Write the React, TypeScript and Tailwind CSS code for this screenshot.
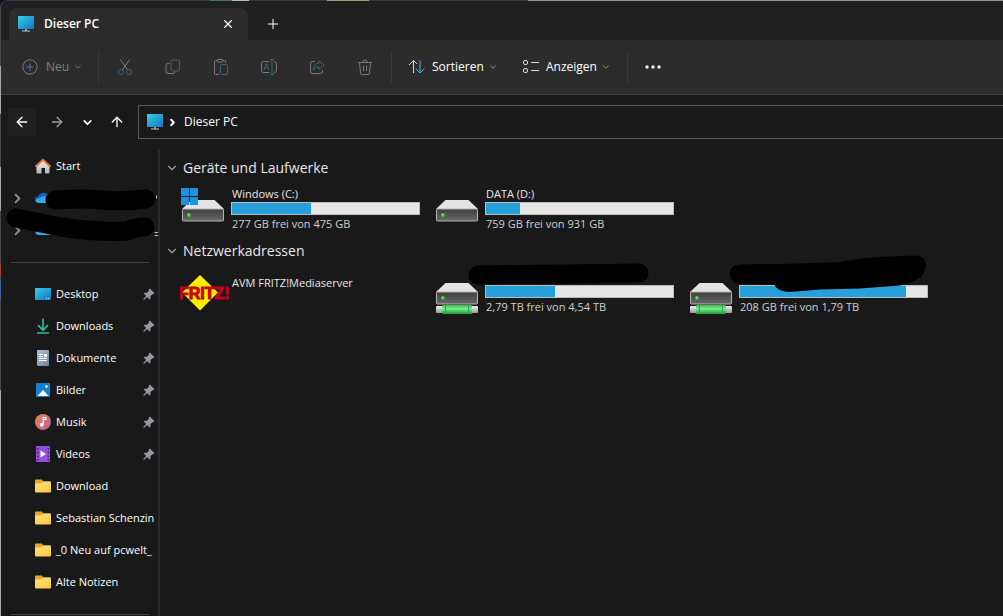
import type { ReactNode } from 'react';
import { ArrowLeft, ArrowRight, ArrowUp, ChevronDown, ChevronRight, Plus, X } from 'lucide-react';

function Monitor() {
  return (
    <svg width="16" height="16" viewBox="0 0 16 16" className="shrink-0">
      <defs>
        <linearGradient id="screen" x1="0" y1="0" x2="1" y2="1">
          <stop offset="0" stopColor="#35d0e8" />
          <stop offset="1" stopColor="#1273c4" />
        </linearGradient>
      </defs>
      <rect x="7" y="13" width="2" height="2" fill="#8b949c" />
      <rect x="4" y="14.5" width="8" height="1" fill="#c3c8cc" />
      <rect y="0" width="16" height="13" rx="0.8" fill="url(#screen)" />
    </svg>
  );
}

function Home() {
  return (
    <svg width="16" height="16" viewBox="0 0 16 16">
      <defs>
        <linearGradient id="wall" x1="0" y1="0" x2="0" y2="1">
          <stop offset="0" stopColor="#f4f4f4" />
          <stop offset="1" stopColor="#b4b4b4" />
        </linearGradient>
      </defs>
      <path d="M1.5 7.5 8 2l6.500 5.500V14.500a1 1 0 0 1-1 1H10V10H6.500v5.500h-4a1 1 0 0 1-1-1z" fill="url(#wall)" />
      <path d="M1 8.200 8 1.800l7 6.400" fill="none" stroke="#e8762c" strokeWidth="2" strokeLinecap="round" strokeLinejoin="round" />
    </svg>
  );
}

function Cloud() {
  return (
    <svg width="20" height="16" viewBox="0 0 20 16">
      <path d="M3.500 13C-1 12.500-1 7 3 6.500 5 2 11 1.500 13 5c5-.5 6 7 1 8z" fill="#0b68c8" />
      <path d="M3.500 13C1 12.500 0 10.500 1 9.500L9 6l9 5-3 2z" fill="#35a5ee" />
    </svg>
  );
}

function DesktopIcon() {
  return (
    <svg width="16" height="16" viewBox="0 0 16 16">
      <rect y="2" width="16" height="12" rx="0.8" fill="url(#screen)" />
      <path d="M11 12.500h1M13 12.500h1" stroke="#d5efff" />
    </svg>
  );
}

function DownloadsIcon() {
  return (
    <svg width="16" height="16" viewBox="0 0 16 16" fill="none" stroke="#2bb795" strokeWidth="1.700">
      <path d="M8 .5V12M3 7.200l5 5 5-5M2 15h12" />
    </svg>
  );
}

function DocumentIcon() {
  return (
    <svg width="16" height="16" viewBox="0 0 16 16">
      <defs>
        <linearGradient id="paper" x1="0" y1="0" x2="1" y2="1">
          <stop offset="0" stopColor="#b4c3d6" />
          <stop offset="1" stopColor="#6880a0" />
        </linearGradient>
      </defs>
      <rect x="2" width="12" height="16" rx="1" fill="url(#paper)" />
      <path d="M4 4.500h4M4 6.500h4M4 8.500h8M4 10.500h8" stroke="#fff" />
      <rect x="9" y="4" width="3" height="3" fill="#fff" />
    </svg>
  );
}

function PictureIcon() {
  return (
    <svg width="16" height="16" viewBox="0 0 16 16">
      <rect x="1" y="1" width="14" height="14" rx="1" fill="#1681d2" />
      <path d="m2.500 14 5.500-6 5.500 6z" fill="#fff" />
      <circle cx="11.500" cy="4.500" r="1.200" fill="#fff" />
    </svg>
  );
}

function MusicIcon() {
  return (
    <svg width="16" height="16" viewBox="0 0 16 16">
      <defs>
        <linearGradient id="disc" x1="0" y1="0" x2="1" y2="1">
          <stop offset="0" stopColor="#ee8350" />
          <stop offset="1" stopColor="#b4609d" />
        </linearGradient>
      </defs>
      <circle cx="8" cy="8" r="8" fill="url(#disc)" />
      <path d="M8.200 10.500V3.500h2.600v2H8.800" fill="none" stroke="#fff" strokeWidth="1.200" />
      <circle cx="6.800" cy="10.800" r="2" fill="#fff" />
    </svg>
  );
}

function VideoIcon() {
  return (
    <svg width="16" height="16" viewBox="0 0 16 16">
      <rect x="1" width="14" height="16" rx="1" fill="#9350dd" />
      <path d="M2.700 2v13M13.300 2v13" stroke="#4a2391" strokeWidth="1.500" strokeDasharray="1.700 2" />
      <path d="M5.500 4.500v7L11 8z" fill="#fff" />
    </svg>
  );
}

function FolderIcon() {
  return (
    <svg width="16" height="16" viewBox="0 0 16 16">
      <defs>
        <linearGradient id="folder" x1="0" y1="0" x2="1" y2="1">
          <stop offset="0" stopColor="#ffe28a" />
          <stop offset="1" stopColor="#fbc842" />
        </linearGradient>
      </defs>
      <path d="M0 2.500a1 1 0 0 1 1-1h5.500L8.500 3.500H15a1 1 0 0 1 1 1V8H0z" fill="#eaa81c" />
      <path d="M0 6.500a1 1 0 0 1 1-1h5.500L8.500 3.500H15a1 1 0 0 1 1 1v9a1 1 0 0 1-1 1H1a1 1 0 0 1-1-1z" fill="url(#folder)" />
    </svg>
  );
}

function Pin() {
  return (
    <svg width="12" height="12" viewBox="0 0 12 12" className="shrink-0">
      <path d="M6.800.5 11.500 5.200 10.500 6.200 9.600 6 7.500 8.100v2.400l-.9.900L4.200 9 .8 11.900l-.6-.6L3.200 8 .8 5.600l.9-.9H4.100L6.200 2.600 5.900 1.400z" fill="#959ba1" />
    </svg>
  );
}

function Drive({ windows, network }: { windows?: boolean; network?: boolean }) {
  return (
    <svg width="48" height="48" viewBox="0 0 48 48" className="mt-1 shrink-0">
      <defs>
        <linearGradient id="case" x1="0" y1="0" x2="0" y2="1">
          <stop offset="0" stopColor="#3d3d3d" />
          <stop offset="1" stopColor="#6a6a6a" />
        </linearGradient>
        <linearGradient id="cable" x1="0" y1="0" x2="0" y2="1">
          <stop offset="0" stopColor="#38b653" />
          <stop offset=".4" stopColor="#76f08d" />
          <stop offset="1" stopColor="#1f963a" />
        </linearGradient>
        <linearGradient id="plug" x1="0" y1="0" x2="0" y2="1">
          <stop offset="0" stopColor="#f0f0f0" />
          <stop offset="1" stopColor="#9a9a9a" />
        </linearGradient>
      </defs>
      <path d="M12.500 16h23L45 25H3z" fill="#e3e3e6" />
      <rect x="3.500" y="25" width="41" height="12" rx="1" fill="url(#case)" stroke="#b5b5b5" />
      <circle cx="10" cy="31" r="1.900" fill="#35c435" />
      <circle cx="9.600" cy="30.600" r=".8" fill="#a0ffa0" />
      {windows && (
        <path d="M2 4h8v8H2zM11 4h8v8h-8zM2 13h8v8H2zM11 13h8v8h-8z" fill="#1992df" />
      )}
      {network && (
        <>
          <rect x="3" y="39" width="42" height="7" rx="1" fill="url(#plug)" />
          <rect x="9" y="38" width="30" height="9" rx="1" fill="url(#cable)" />
          <path d="M12.500 38v9M35.500 38v9" stroke="#2aa546" />
        </>
      )}
    </svg>
  );
}

function FritzLogo() {
  return (
    <svg width="48" height="48" viewBox="0 0 48 48" className="mt-1 shrink-0 overflow-visible">
      <path d="M21 8 39 25.500 21 43.500 3 25.500z" fill="#ffec00" />
      <text
        x="0"
        y="32"
        fontFamily="'Liberation Sans', sans-serif"
        fontSize="16"
        fontWeight="bold"
        fill="#e2001a"
        stroke="#b80016"
        strokeWidth="1"
      >
        FRITZ!
      </text>
    </svg>
  );
}

const line = { fill: 'none', stroke: '#7b7b7b', strokeWidth: 1 };

const tools = [
  {
    label: 'Ausschneiden',
    icon: (
      <svg width="16" height="16" viewBox="0 0 16 16" {...line}>
        <path d="M3.500 .5 10.500 11M12.500 .5 5.500 11" />
        <g stroke="#3b6579">
          <circle cx="4" cy="13" r="2.500" />
          <circle cx="12" cy="13" r="2.500" />
        </g>
      </svg>
    ),
  },
  {
    label: 'Kopieren',
    icon: (
      <svg width="16" height="16" viewBox="0 0 16 16" {...line}>
        <path d="M4.500 4.500H3a2 2 0 0 0-2 2v6a2 2 0 0 0 2 2h5a2 2 0 0 0 2-2" />
        <rect x="6" y="1" width="8.500" height="11" rx="2" stroke="#3b6579" />
      </svg>
    ),
  },
  {
    label: 'Einfügen',
    icon: (
      <svg width="16" height="16" viewBox="0 0 16 16" {...line}>
        <path d="M6 15.500H2.500a1 1 0 0 1-1-1v-12a1 1 0 0 1 1-1H4M10 1.500h1.500a1 1 0 0 1 1 1V4" />
        <rect x="4" y=".5" width="6" height="2.500" rx="1" />
        <rect x="7.500" y="5.500" width="7" height="10" rx="1" stroke="#3b6579" />
      </svg>
    ),
  },
  {
    label: 'Umbenennen',
    icon: (
      <svg width="18" height="16" viewBox="0 0 18 16" {...line}>
        <path d="M9.500 2.500h-6a2 2 0 0 0-2 2v7a2 2 0 0 0 2 2h6M14 2.500a2.500 2.500 0 0 1 2.500 2.500v6a2.500 2.500 0 0 1-2.500 2.500" />
        <path d="m4 11 2.500-6.500L9 11M5 9h3M10 .5h4M10 15.500h4M12 .5v15" stroke="#3b6579" />
      </svg>
    ),
  },
  {
    label: 'Freigeben',
    icon: (
      <svg width="16" height="16" viewBox="0 0 16 16" {...line}>
        <path d="M6 2.500H3.500a2 2 0 0 0-2 2v8a2 2 0 0 0 2 2h8a2 2 0 0 0 2-2V11" />
        <path d="M10 1.500 15 6l-5 4.500V8C7 8 5.500 9 4 11c.3-4 2.500-6.500 6-7z" stroke="#3b6579" strokeLinejoin="round" />
      </svg>
    ),
  },
  {
    label: 'Löschen',
    icon: (
      <svg width="16" height="16" viewBox="0 0 16 16" {...line}>
        <path d="M1 3.500h14M6 3a2 2 0 0 1 4 0M2.500 3.500l1 10.500a1.500 1.500 0 0 0 1.500 1.500h6a1.500 1.500 0 0 0 1.500-1.500l1-10.500M6.500 6.500v5.500M9.500 6.500v5.500" />
      </svg>
    ),
  },
];

const places = [
  { name: 'Desktop', icon: <DesktopIcon />, pinned: true },
  { name: 'Downloads', icon: <DownloadsIcon />, pinned: true },
  { name: 'Dokumente', icon: <DocumentIcon />, pinned: true },
  { name: 'Bilder', icon: <PictureIcon />, pinned: true },
  { name: 'Musik', icon: <MusicIcon />, pinned: true },
  { name: 'Videos', icon: <VideoIcon />, pinned: true },
  { name: 'Download', icon: <FolderIcon /> },
  { name: 'Sebastian Schenzin', icon: <FolderIcon /> },
  { name: '_0 Neu auf pcwelt_', icon: <FolderIcon /> },
  { name: 'Alte Notizen', icon: <FolderIcon /> },
];

function Divider() {
  return <div className="h-8 w-px bg-[#3b3b3b]" />;
}

function Group({ title, children }: { title: string; children: ReactNode }) {
  return (
    <section>
      <h2>
        <button className="flex h-6 items-center gap-1 text-sm text-[#e8e8e8]">
          <ChevronDown size={14} strokeWidth={2} className="text-[#a0a0a0]" />
          {title}
        </button>
      </h2>
      <div className="flex h-[59px] flex-wrap pl-[14px]">{children}</div>
    </section>
  );
}

type DeviceProps = { icon: ReactNode; name?: string; info?: string; used?: number; mark?: ReactNode };

function Device({ icon, name, info, used, mark }: DeviceProps) {
  const hasBar = used !== undefined;
  return (
    <div className="relative flex w-[254px] gap-1 text-[11px]">
      {icon}
      <div className={`w-[189px] ${hasBar ? 'pt-[6px]' : 'pt-3'}`}>
        <p className="h-4 pl-px leading-4 text-[#e8e8e8]">{name}</p>
        {hasBar && (
          <>
            <div className="h-[13px] border border-[#bcbcbc] bg-[#e6e6e6]">
              <div className="h-full bg-[#26a0da]" style={{ width: `${used}%` }} />
            </div>
            <p className="pl-px leading-[18px] text-[#d0d0d0]">{info}</p>
          </>
        )}
      </div>
      {mark}
    </div>
  );
}

export default function App() {
  return (
    <div className="relative bg-[#101022]">
      <div className="flex min-h-screen flex-col overflow-hidden rounded-tl-lg border-t border-l border-t-[#3a3a42] border-l-[#48484c] bg-[#191919] font-['Open_Sans','Noto_Sans',sans-serif] text-xs text-white">
        <div className="flex h-[39px] items-end bg-[#202020] pl-2">
          <div className="flex h-8 w-[239px] items-center rounded-t-lg bg-[#2c2c2c] pr-[13px] pl-[9px]">
            <Monitor />
            <span className="ml-[10px] flex-1 font-semibold">Dieser PC</span>
            <button aria-label="Tab schließen">
              <X size={14} strokeWidth={2} />
            </button>
          </div>
          <button aria-label="Neuer Tab" className="mb-2 ml-[17px]">
            <Plus size={16} strokeWidth={1.5} />
          </button>
        </div>

        <div className="flex h-[55px] items-center border-b border-[#3d3d3d] bg-[#2c2c2c] pl-[21px]">
          <button className="flex w-[76px] items-center text-[#808080]">
            <svg width="16" height="16" viewBox="0 0 16 16" {...line}>
              <circle cx="8" cy="8" r="7.200" />
              <path d="M8 4.500v7M4.500 8h7" stroke="#4a7c93" />
            </svg>
            <span className="mr-1 ml-2">Neu</span>
            <ChevronDown size={10} />
          </button>
          <Divider />
          <div className="flex px-[2px]">
            {tools.map((tool) => (
              <button key={tool.label} aria-label={tool.label} className="flex w-12 justify-center px-4">
                <span className="flex w-[18px] shrink-0 justify-center">{tool.icon}</span>
              </button>
            ))}
          </div>
          <Divider />
          <button className="flex w-[114px] items-center pl-4">
            <svg width="18" height="16" viewBox="0 0 18 16" fill="none" stroke="#d8d8d8">
              <path d="M5.500 14V1.500M1 6l4.500-4.500L9 5" />
              <path d="M12 1.500v12.500M8 9.500l4 4.500 4.500-4.500" stroke="#4cb4e7" />
            </svg>
            <span className="mr-1 ml-[6px]">Sortieren</span>
            <ChevronDown size={10} className="text-[#a0a0a0]" />
          </button>
          <button className="flex w-[121px] items-center pl-4">
            <svg width="18" height="16" viewBox="0 0 18 16" fill="none" stroke="#d8d8d8">
              <rect x="1.500" y="1.500" width="4" height="4" rx="1.500" />
              <rect x="1.500" y="9.500" width="4" height="4" rx="1.500" />
              <path d="M9 3.500h8M9 11.500h8" />
            </svg>
            <span className="mr-1 ml-[6px]">Anzeigen</span>
            <ChevronDown size={10} className="text-[#a0a0a0]" />
          </button>
          <Divider />
          <button aria-label="Mehr anzeigen" className="ml-4">
            <svg width="18" height="4" viewBox="0 0 18 4" fill="#f0f0f0">
              <circle cx="3" cy="2" r="1.700" />
              <circle cx="9" cy="2" r="1.700" />
              <circle cx="15" cy="2" r="1.700" />
            </svg>
          </button>
        </div>

        <div className="flex h-[54px] items-center pl-[7px]">
          <button aria-label="Zurück" className="flex size-7 items-center justify-center bg-[#202020]">
            <ArrowLeft size={16} />
          </button>
          <button aria-label="Vorwärts" className="ml-[7px] flex size-7 items-center justify-center text-[#a0a0a0]">
            <ArrowRight size={16} />
          </button>
          <button aria-label="Zuletzt besucht" className="ml-[6px] flex w-5 justify-center">
            <ChevronDown size={13} strokeWidth={3} />
          </button>
          <button aria-label="Nach oben" className="ml-[10px] flex w-5 justify-center">
            <ArrowUp size={16} />
          </button>
          <div className="ml-[11px] flex h-[34px] flex-1 items-center border border-r-0 border-[#5a5a5a] pl-2">
            <Monitor />
            <ChevronRight size={11} strokeWidth={4} className="mr-[6px] ml-1" />
            <a href="#pc">Dieser PC</a>
          </div>
        </div>

        <div className="flex flex-1">
          <nav className="relative w-[159px] shrink-0 overflow-hidden border-r-2 border-[#2b2b2b] pt-px text-[11px]">
            <a href="#start" className="flex h-8 items-center gap-[5px] pl-[34px]">
              <Home />
              Start
            </a>
            {['eins', 'zwei'].map((id) => (
              <a key={id} href={`#${id}`} aria-label="OneDrive" className="flex h-8 items-center pl-[9px] text-[#8c8c8c]">
                <ChevronRight size={15} strokeWidth={3} />
                <span className="ml-[10px]">
                  <Cloud />
                </span>
              </a>
            ))}
            <hr className="mt-4 mr-[9px] mb-[15px] ml-[10px] border-[#3b3b3b]" />
            {places.map((place) => (
              <a key={place.name} href={`#${place.name}`} className="flex h-8 items-center gap-[5px] pr-[3px] pl-[34px]">
                <span className="shrink-0">{place.icon}</span>
                <span className="flex-1 whitespace-nowrap">{place.name}</span>
                {place.pinned && <Pin />}
              </a>
            ))}
            <hr className="mt-4 mr-[9px] ml-[10px] border-[#3b3b3b]" />
            <svg width="158" height="70" viewBox="0 0 158 70" className="absolute top-10 left-0" fill="none" stroke="#000" strokeWidth="19" strokeLinecap="round" strokeLinejoin="round">
              <path d="M155.500 7v2M154 43.500h2.500M154 46.500h2.500" stroke="#c8c8c8" strokeWidth="1" />
              <path d="M54 11q30-2 48 0t43-1" />
              <path d="M15 29 60 38q40 6 66 4 9-4 18-4" />
            </svg>
          </nav>

          <main className="flex-1 pt-[7px] pl-[5px]">
            <Group title="Geräte und Laufwerke">
              <Device icon={<Drive windows />} name="Windows (C:)" info="277 GB frei von 475 GB" used={42} />
              <Device icon={<Drive />} name="DATA (D:)" info="759 GB frei von 931 GB" used={18} />
            </Group>
            <Group title="Netzwerkadressen">
              <Device icon={<FritzLogo />} name="AVM FRITZ!Mediaserver" />
              <Device
                icon={<Drive network />}
                info="2,79 TB frei von 4,54 TB"
                used={37}
                mark={
                  <svg width="220" height="24" viewBox="0 0 220 24" className="absolute top-0 left-0">
                    <path d="M45 12q70-1 161-2" fill="none" stroke="#000" strokeWidth="19" strokeLinecap="round" />
                  </svg>
                }
              />
              <Device
                icon={<Drive network />}
                info="208 GB frei von 1,79 TB"
                used={89}
                mark={
                  <svg width="242" height="40" viewBox="0 0 242 40" className="absolute -top-2 left-0">
                    <path d="M43 19c0-6 4-9.500 10-9.500l60-1 40-1.500q20-4 40-5l35-1.500c7 0 11 4 11 9 0 8-4 13-11 16q-7 4-15 5l-40 3-40 1-30 2.500q-12 0-16-7.500L53 29c-6 0-10-4-10-10" />
                  </svg>
                }
              />
            </Group>
          </main>
        </div>
      </div>

      {/* slivers of the windows behind */}
      <svg width="1" height="616" className="absolute top-0 left-0">
        <path d="M.5 66v48M.5 167v44M.5 390v226" stroke="#a5a5a5" />
        <path d="M.5 263v14" stroke="#a04038" />
        <path d="M.5 279v20" stroke="#3d5f9c" />
      </svg>
      <svg width="100%" height="1" className="absolute top-0 left-0">
        <rect x="210" width="22" height="1" fill="#3f7a4c" />
        <rect x="232" width="17" height="1" fill="#b5b5b5" />
        <rect x="327" width="42" height="1" fill="#a09a68" />
        <rect x="528" width="100%" height="1" fill="#909496" />
      </svg>
    </div>
  );
}
